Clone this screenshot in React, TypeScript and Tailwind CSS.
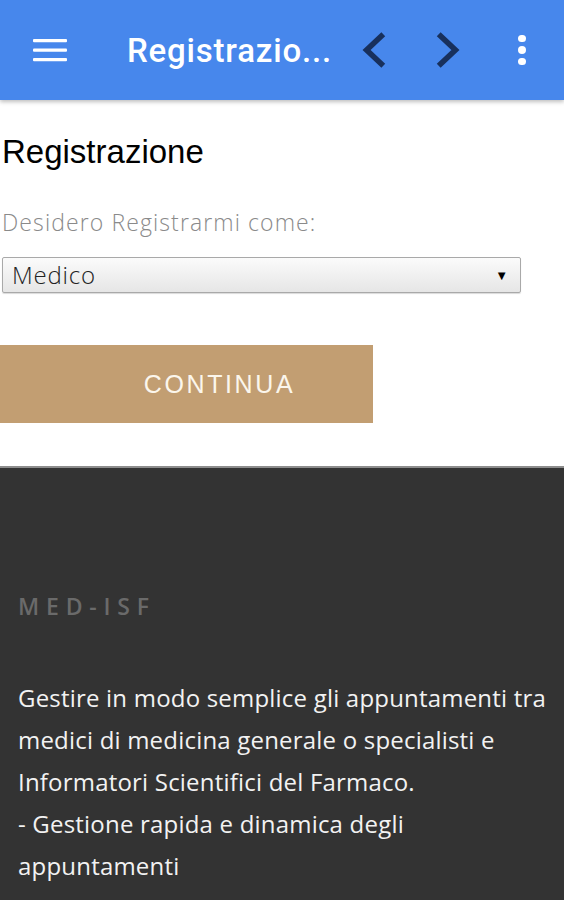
import React from "react";

export default function App() {
  return (
    <div className="w-[564px] h-[900px] overflow-hidden bg-white flex flex-col" style={{ fontFamily: "'Open Sans', 'Liberation Sans', sans-serif" }}>
      <header className="h-[100px] shrink-0 bg-[#4787ec] flex items-center relative z-10 shadow-[0_2px_4px_rgba(0,0,0,0.25)]">
        <div className="w-[100px] flex justify-center">
          <svg width="34" height="24" viewBox="0 0 34 24">
            <rect x="0" y="1" width="34" height="3.2" rx="1" fill="#fff" />
            <rect x="0" y="10.5" width="34" height="3.2" rx="1" fill="#fff" />
            <rect x="0" y="20" width="34" height="3.2" rx="1" fill="#fff" />
          </svg>
        </div>
        <div className="ml-[27px] w-[210px] text-white text-[33px] font-medium leading-none tracking-[0.8px] whitespace-nowrap" style={{ fontFamily: "Roboto, sans-serif" }}>
          Registrazio...
        </div>
        <div className="w-[26px] ml-[24px] flex justify-center">
          <svg width="28" height="40" viewBox="0 0 28 40">
            <path d="M24 3 L6 20 L24 37" stroke="#18305c" strokeWidth="6" fill="none" strokeLinejoin="miter" />
          </svg>
        </div>
        <div className="w-[26px] ml-[48px] flex justify-center">
          <svg width="28" height="40" viewBox="0 0 28 40">
            <path d="M4 3 L22 20 L4 37" stroke="#18305c" strokeWidth="6" fill="none" strokeLinejoin="miter" />
          </svg>
        </div>
        <div className="ml-[57px] flex flex-col gap-[4px] items-center">
          <span className="w-[7.5px] h-[7.5px] rounded-full bg-white" />
          <span className="w-[7.5px] h-[7.5px] rounded-full bg-white" />
          <span className="w-[7.5px] h-[7.5px] rounded-full bg-white" />
        </div>
      </header>

      <main className="h-[366px] shrink-0 bg-white flex flex-col">
        <h1 className="mt-[33px] ml-[2px] text-[33px] leading-[38px] text-black tracking-[0px]" style={{ fontFamily: "'Liberation Sans', sans-serif" }}>
          Registrazione
        </h1>
        <p className="mt-[37px] ml-[2px] text-[23px] leading-[28px] text-[#8a8a8a] font-light tracking-[1.1px] whitespace-nowrap">
          Desidero Registrarmi come:
        </p>
        <div className="mt-[21px] ml-[2px] w-[519px] h-[36px] border border-[#a9a9a9] rounded-[2px] bg-gradient-to-b from-[#fbfbfb] to-[#e6e6e6] flex items-center justify-between pl-[9px] pr-[12px] shadow-[0_1px_1px_rgba(0,0,0,0.15)]">
          <span className="text-[24px] text-[#222] leading-none font-light tracking-[0.8px]">Medico</span>
          <span className="text-[13px] text-black leading-none">▼</span>
        </div>
        <div className="mt-[52px] w-[373px] h-[78px] bg-[#c29e72] flex items-center justify-center">
          <span className="ml-[66px] text-[#fbf6ec] text-[25px] tracking-[2.6px] leading-none" style={{ fontFamily: "'Liberation Sans', sans-serif" }}>
            CONTINUA
          </span>
        </div>
      </main>

      <footer className="flex-1 bg-[#333333] border-t-[2px] border-[#8d8d8d] px-[18px]">
        <div className="mt-[127px] text-[#6a6a6a] text-[23px] font-semibold tracking-[6.8px] leading-none">
          MED-ISF
        </div>
        <div className="mt-[59px] text-[#f2f2f2] text-[24px] leading-[42px] tracking-[0.2px] whitespace-nowrap">
          <div>Gestire in modo semplice gli appuntamenti tra</div>
          <div>medici di medicina generale o specialisti e</div>
          <div>Informatori Scientifici del Farmaco.</div>
          <div>- Gestione rapida e dinamica degli</div>
          <div>appuntamenti</div>
        </div>
      </footer>
    </div>
  );
}
